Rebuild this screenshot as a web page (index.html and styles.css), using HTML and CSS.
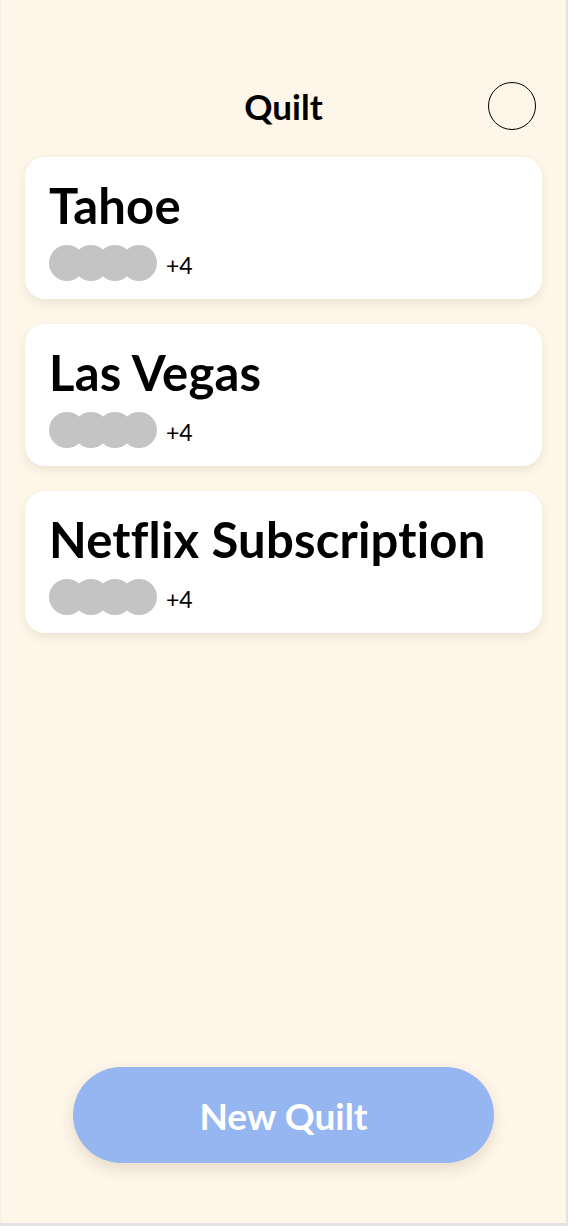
FILE: index.html
```html
<!DOCTYPE html>
<html lang="en">
<head>
<meta charset="utf-8">
<title>Quilt</title>
<link rel="stylesheet" href="styles.css">
</head>
<body>
<div class="screen">
  <header class="header">
    <span class="spacer"></span>
    <h1 class="app-title">Quilt</h1>
    <span class="profile"></span>
  </header>
  <main class="list">
    <section class="card">
      <h2 class="card-title">Tahoe</h2>
      <div class="members">
        <span class="avatar"></span><span class="avatar"></span><span class="avatar"></span><span class="avatar"></span>
        <span class="more">+4</span>
      </div>
    </section>
    <section class="card">
      <h2 class="card-title">Las Vegas</h2>
      <div class="members">
        <span class="avatar"></span><span class="avatar"></span><span class="avatar"></span><span class="avatar"></span>
        <span class="more">+4</span>
      </div>
    </section>
    <section class="card">
      <h2 class="card-title">Netflix Subscription</h2>
      <div class="members">
        <span class="avatar"></span><span class="avatar"></span><span class="avatar"></span><span class="avatar"></span>
        <span class="more">+4</span>
      </div>
    </section>
  </main>
  <div class="footer">
    <button class="new-btn">New Quilt</button>
  </div>
</div>
</body>
</html>
```

FILE: styles.css
```css
html, body {
  margin: 0;
  padding: 0;
}
body {
  background: #e3e3e3;
  width: 568px;
  height: 1226px;
  overflow: hidden;
  font-family: Lato, "Noto Sans", sans-serif;
  color: #000;
}
.screen {
  box-sizing: border-box;
  width: 566px;
  height: 1223px;
  background: #fdf6e9;
  border-left: 1px solid #f6f1e6;
  display: flex;
  flex-direction: column;
  padding: 82px 24px 60px 24px;
}
.header {
  display: grid;
  grid-template-columns: 1fr auto 1fr;
  align-items: center;
  height: 48px;
}
.app-title {
  margin: 0;
  font-size: 35px;
  font-weight: 700;
  line-height: 48px;
}
.profile {
  justify-self: end;
  box-sizing: border-box;
  width: 48px;
  height: 48px;
  border: 1.5px solid #000;
  border-radius: 50%;
  margin-right: 6px;
}
.list {
  margin-top: 27px;
  display: flex;
  flex-direction: column;
  gap: 25px;
}
.card {
  box-sizing: border-box;
  height: 142px;
  background: #fff;
  border-radius: 20px;
  box-shadow: 0 4px 8px rgba(120, 100, 60, 0.12);
  padding: 18px 24px 0;
  display: flex;
  flex-direction: column;
}
.card-title {
  margin: 0;
  font-size: 49px;
  font-weight: 700;
  line-height: 60px;
  letter-spacing: 0.2px;
}
.members {
  display: flex;
  align-items: center;
  margin-top: 10px;
}
.avatar {
  width: 36px;
  height: 36px;
  border-radius: 50%;
  background: #c4c4c4;
  margin-right: -12px;
}
.more {
  margin-left: 21px;
  font-size: 23px;
  font-weight: 400;
  padding-top: 4px;
}
.footer {
  margin-top: auto;
  display: flex;
  justify-content: center;
}
.new-btn {
  width: 421px;
  height: 96px;
  border: none;
  border-radius: 48px;
  background: #96b6f1;
  color: #fff;
  font-family: Lato, "Noto Sans", sans-serif;
  font-size: 37px;
  font-weight: 700;
  box-shadow: 0 6px 14px rgba(120, 100, 60, 0.18);
  padding: 0;
}
```
